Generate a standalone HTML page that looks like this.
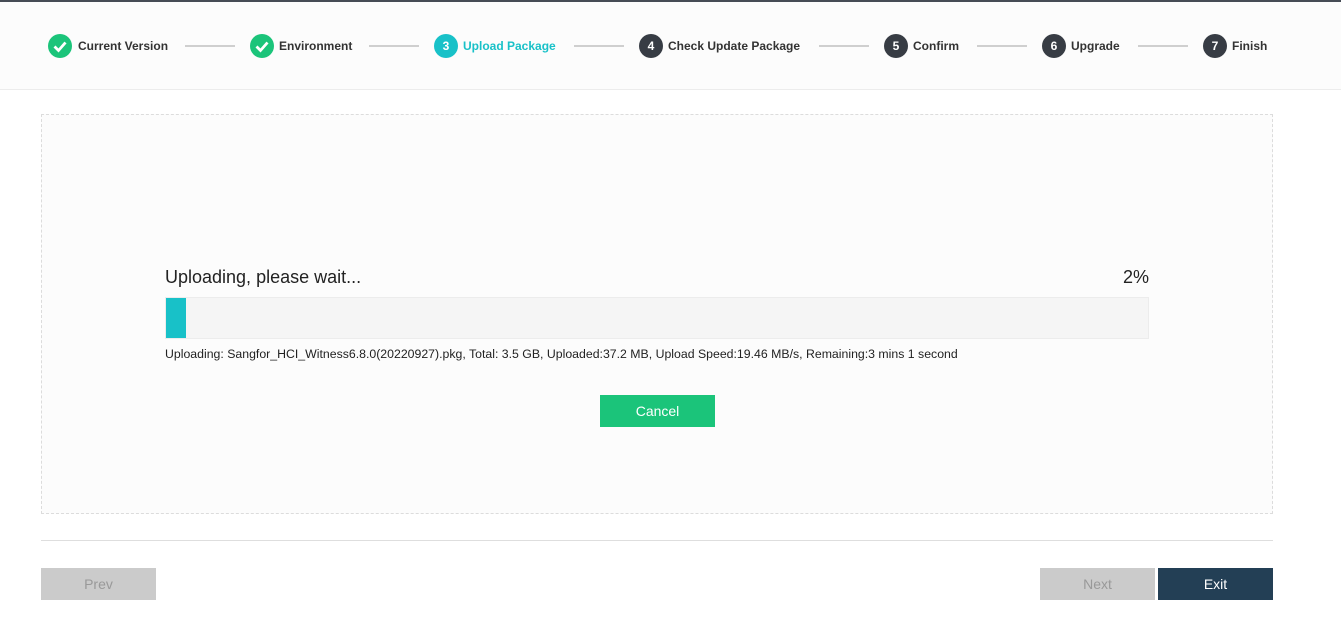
<!DOCTYPE html>
<html><head><meta charset="utf-8"><style>
*{margin:0;padding:0;box-sizing:border-box}
body{width:1341px;height:623px;background:#fff;font-family:"Liberation Sans",Arial,sans-serif;position:relative;overflow:hidden;color:#333}
.top{position:absolute;left:0;top:0;width:1341px;height:2px;background:#464c55}
.hdr{position:absolute;left:0;top:2px;width:1341px;height:88px;background:#fcfcfc;border-bottom:1px solid #ececec}
.c{position:absolute;top:34px;width:24px;height:24px;border-radius:50%;color:#fff;font-size:12px;font-weight:bold;text-align:center;line-height:24px;background:#373c44}
.c.g{background:#1bc47a}.c.b{background:#18c1c8}
.t{position:absolute;top:38px;font-size:12px;font-weight:bold;color:#333;line-height:16px}
.t.b{color:#18c1c8}
.l{position:absolute;top:45px;width:50px;height:2px;background:#cfcfcf}
.box{position:absolute;left:41px;top:114px;width:1232px;height:400px;border:1px dashed #dcdcdc;background:#fcfcfc}
.bar{position:absolute;left:165px;top:297px;width:984px;height:42px;background:#f5f5f5;border:1px solid #ececec}
.fill{position:absolute;left:0;top:0;width:20px;height:40px;background:#18c1c8}
.btn{position:absolute;height:32px;line-height:32px;text-align:center;font-size:14px}
</style></head><body>
<div class="top"></div>
<div class="hdr"></div>
<div class="c g" style="left:48px"><svg width="24" height="24" viewBox="0 0 24 24"><path d="M6.5 12.5l4 4 7-8" stroke="#fff" stroke-width="2.8" fill="none"/></svg></div>
<div class="t" style="left:78px">Current Version</div>
<div class="l" style="left:185px"></div>
<div class="c g" style="left:250px"><svg width="24" height="24" viewBox="0 0 24 24"><path d="M6.5 12.5l4 4 7-8" stroke="#fff" stroke-width="2.8" fill="none"/></svg></div>
<div class="t" style="left:279px">Environment</div>
<div class="l" style="left:369px"></div>
<div class="c b" style="left:434px">3</div>
<div class="t b" style="left:463px">Upload Package</div>
<div class="l" style="left:574px"></div>
<div class="c" style="left:639px">4</div>
<div class="t" style="left:668px">Check Update Package</div>
<div class="l" style="left:819px"></div>
<div class="c" style="left:884px">5</div>
<div class="t" style="left:913px">Confirm</div>
<div class="l" style="left:977px"></div>
<div class="c" style="left:1042px">6</div>
<div class="t" style="left:1071px">Upgrade</div>
<div class="l" style="left:1138px"></div>
<div class="c" style="left:1203px">7</div>
<div class="t" style="left:1232px">Finish</div>

<div class="box"></div>
<div style="position:absolute;left:165px;top:267px;font-size:18px;color:#222">Uploading, please wait...</div>
<div style="position:absolute;left:1100px;width:49px;text-align:right;top:267px;font-size:18px;color:#222">2%</div>
<div class="bar"><div class="fill"></div></div>
<div style="position:absolute;left:165px;top:347px;font-size:12.3px;color:#222;white-space:nowrap">Uploading: Sangfor_HCI_Witness6.8.0(20220927).pkg, Total: 3.5 GB, Uploaded:37.2 MB, Upload Speed:19.46 MB/s, Remaining:3 mins 1 second</div>
<div class="btn" style="left:600px;top:395px;width:115px;background:#1bc47a;color:#fff">Cancel</div>

<div style="position:absolute;left:41px;top:540px;width:1232px;height:1px;background:#dedede"></div>
<div class="btn" style="left:41px;top:568px;width:115px;background:#cbcbcb;color:#999">Prev</div>
<div class="btn" style="left:1040px;top:568px;width:115px;background:#cbcbcb;color:#999">Next</div>
<div class="btn" style="left:1158px;top:568px;width:115px;background:#233f55;color:#fff">Exit</div>
</body></html>
